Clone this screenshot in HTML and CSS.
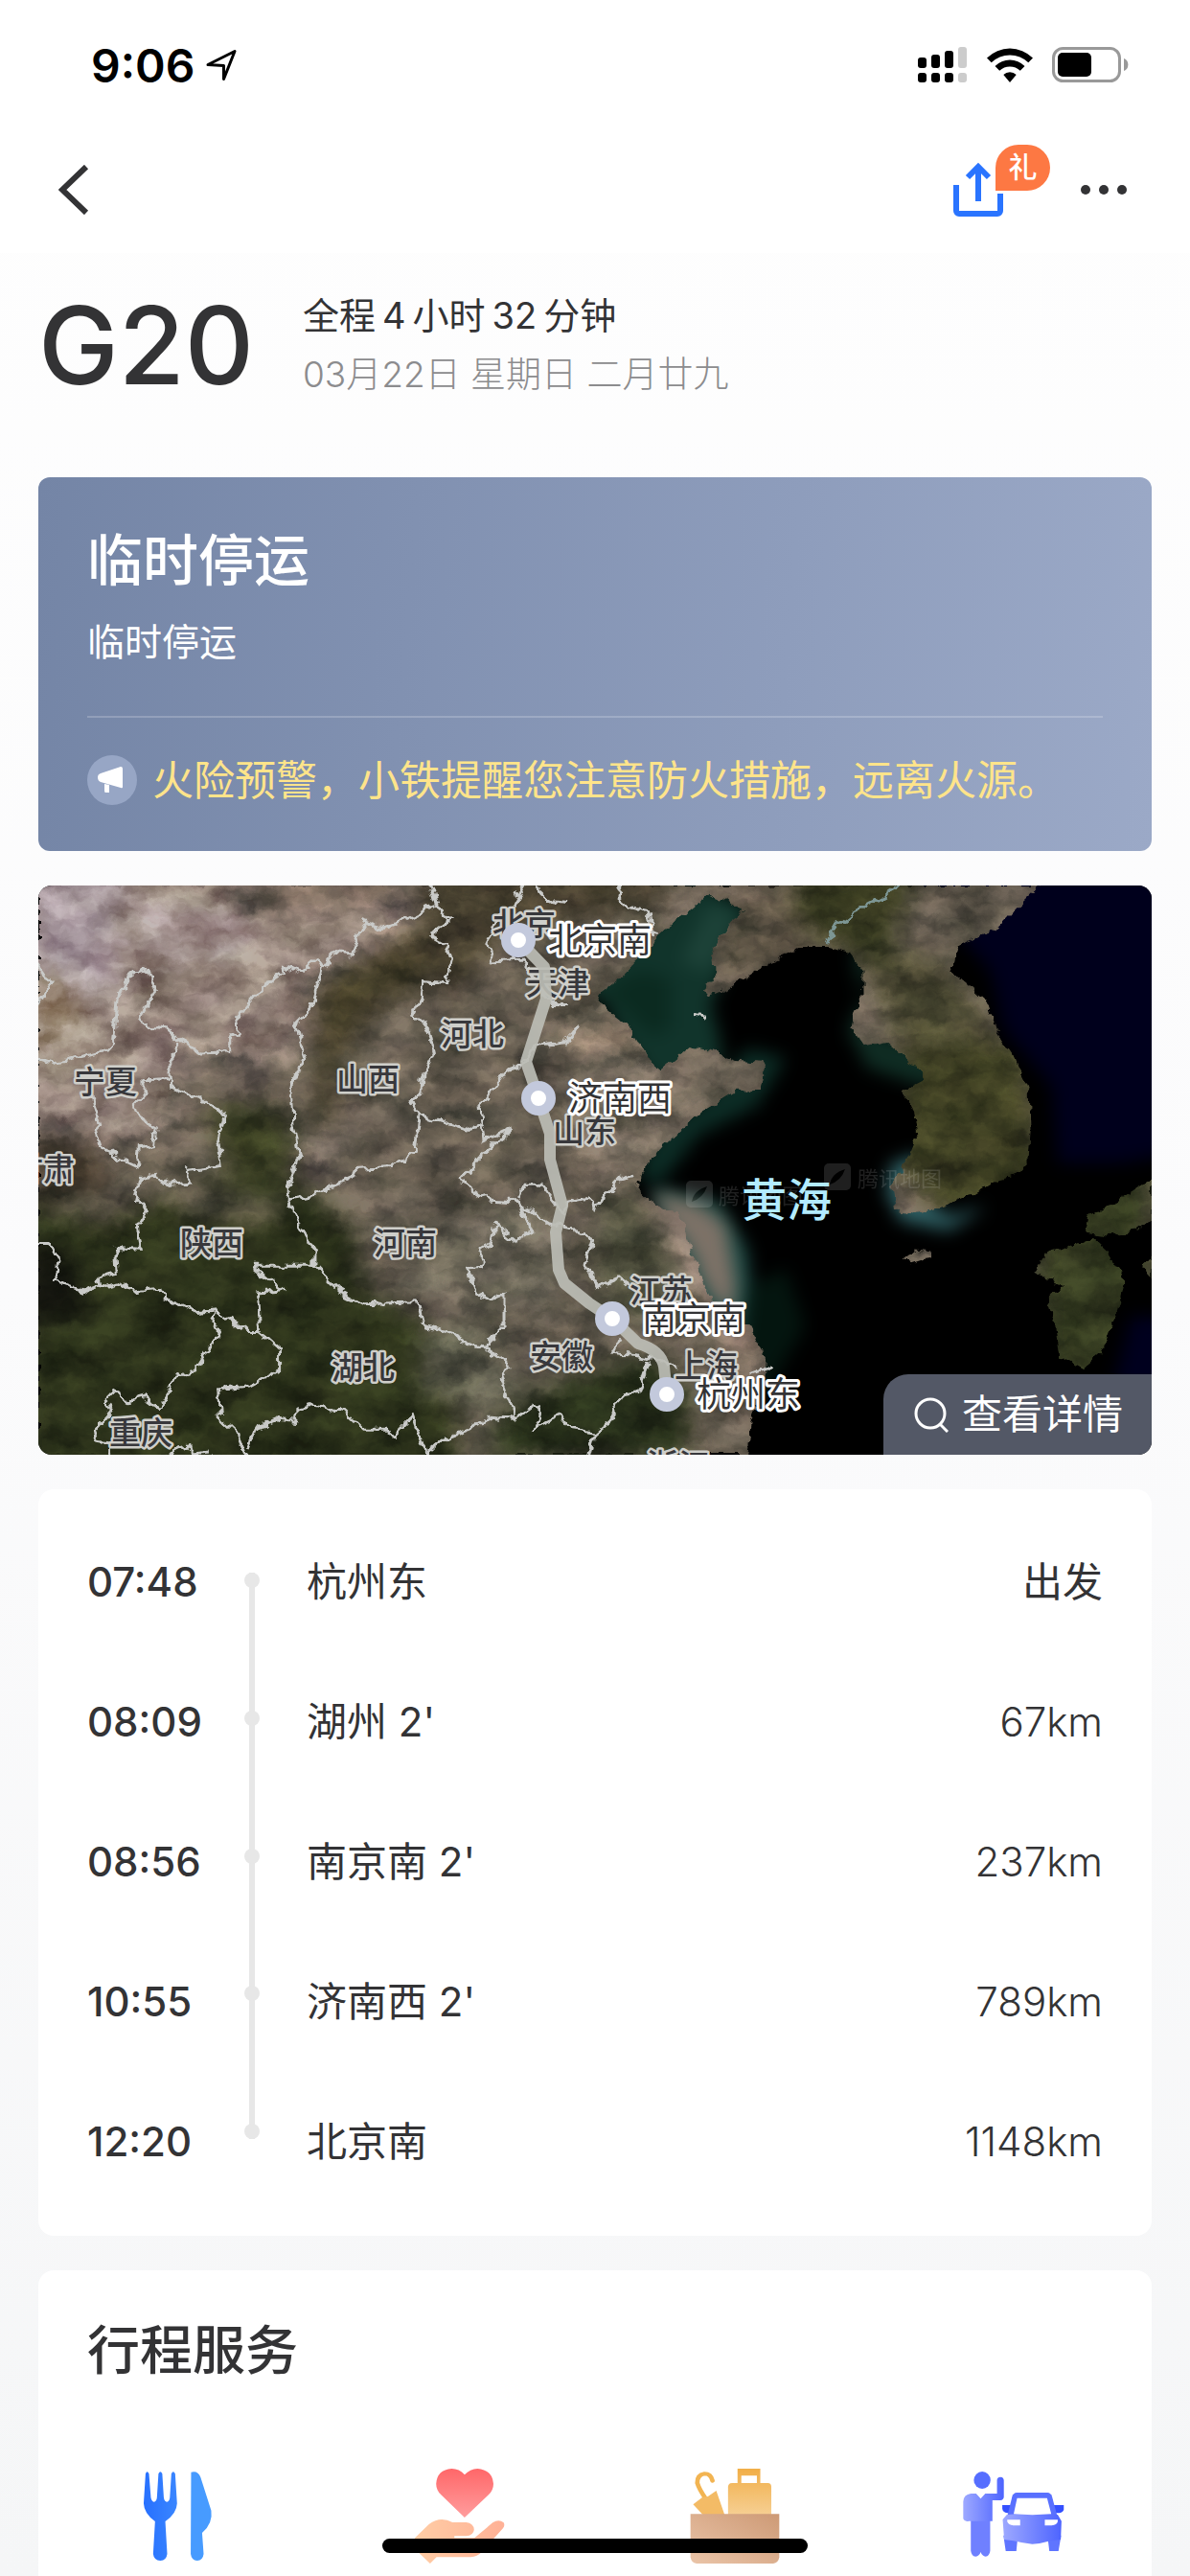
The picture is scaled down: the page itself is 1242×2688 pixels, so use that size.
FILE: index.html
```
<!DOCTYPE html>
<html lang="zh-CN">
<head>
  <meta charset="UTF-8">
  <meta name="viewport" content="width=device-width, initial-scale=1.0">
  <title>G20 列车详情</title>
  <link rel="stylesheet" href="styles.css">
</head>
<body>

  <header class="top">
    <div class="status-bar">
      <div class="status-left">
        <span class="clock">9:06</span>
        <svg class="icon-location" viewBox="0 0 32 34" aria-hidden="true">
          <path d="M2 16.500 30 2.500 18.500 31.500V17.500Z"/>
        </svg>
      </div>
      <div class="status-right">
        <svg width="52" height="38" viewBox="0 0 52 38" aria-hidden="true">
          <rect x="0" y="11" width="9" height="11" rx="3"/>
          <rect x="14" y="8" width="9" height="14" rx="3"/>
          <rect x="28" y="4" width="9" height="18" rx="3"/>
          <rect x="42" y="0" width="9" height="22" rx="3" fill="#ccc"/>
          <rect x="0" y="27" width="9" height="10" rx="3"/>
          <rect x="14" y="27" width="9" height="10" rx="3"/>
          <rect x="28" y="27" width="9" height="10" rx="3"/>
          <rect x="42" y="27" width="9" height="10" rx="3" fill="#ccc"/>
        </svg>
        <svg width="48" height="36" viewBox="0 0 48 36" aria-hidden="true">
          <path d="M0 10.500A34 34 0 0 1 48 10.500L43.300 15.300A27.500 27.500 0 0 0 4.700 15.300Z"/>
          <path d="M8.500 19A22 22 0 0 1 39.500 19L34.800 23.800A15.500 15.500 0 0 0 13.200 23.800Z"/>
          <path d="M17.300 28A9.500 9.500 0 0 1 30.700 28L24 36Z"/>
        </svg>
        <svg width="80" height="38" viewBox="0 0 80 38" aria-hidden="true">
          <rect x="1.500" y="1.500" width="69" height="34" rx="10" fill="none" stroke="#999" stroke-width="3"/>
          <rect x="6" y="6" width="35" height="25" rx="5"/>
          <path d="M75 12a7 7 0 0 1 0 13Z" fill="#999"/>
        </svg>
      </div>
    </div>

    <nav class="nav-bar">
      <button type="button" class="icon-btn" aria-label="返回">
        <svg width="32" height="52" viewBox="0 0 32 52"><path d="M29 2 4 26l25 24" fill="none" stroke="#333335" stroke-width="6"/></svg>
      </button>
      <div class="nav-actions">
        <button type="button" class="icon-btn share" aria-label="分享">
          <svg width="52" height="58" viewBox="0 0 52 58" fill="none" stroke="#2a74ff" stroke-width="6">
            <path d="M3 24v27a3 3 0 0 0 3 3h40a3 3 0 0 0 3-3V33"/>
            <path d="M26 41V5M15 16 26 5l11 11"/>
          </svg>
          <span class="badge">礼</span>
        </button>
        <button type="button" class="icon-btn" aria-label="更多">
          <svg width="50" height="12" viewBox="0 0 50 12" fill="#333335"><circle cx="6" cy="6" r="5"/><circle cx="25" cy="6" r="5"/><circle cx="44" cy="6" r="5"/></svg>
        </button>
      </div>
    </nav>
  </header>

  <main class="content">
    <section class="train">
      <h1 class="train-no">G20</h1>
      <div>
        <p class="duration">全程<span class="num">4</span>小时<span class="num">32</span>分钟</p>
        <p class="date">03月22日 星期日 二月廿九</p>
      </div>
    </section>

    <!-- 停运提示 -->
    <section class="alert">
      <h2>临时停运</h2>
      <p class="alert-text">临时停运</p>
      <div class="notice">
        <svg width="52" height="52" viewBox="0 0 52 52" aria-hidden="true">
          <circle cx="26" cy="26" r="26" fill="#97a6c5"/>
          <path d="M14 19 35 12q2 0 2 2v19q0 2-2 1L14 28q-3-1-3-5 0-3 3-4ZM18 30l5 1v8h-4q-1 0-1-2Z" fill="#fff"/>
        </svg>
        <p>火险预警，小铁提醒您注意防火措施，远离火源。</p>
      </div>
    </section>

    <!-- 线路地图 -->
    <section class="map">
      <svg class="map-canvas" viewBox="0 0 1162 594" role="img" aria-label="线路地图">
        <defs>
          <filter id="blur" x="-20%" y="-20%" width="140%" height="140%" color-interpolation-filters="sRGB"><feGaussianBlur stdDeviation="12"/></filter>
          <filter id="soft" x="-20%" y="-20%" width="140%" height="140%" color-interpolation-filters="sRGB"><feGaussianBlur stdDeviation="9"/></filter>
          <filter id="coast" x="0" y="0" width="100%" height="100%" color-interpolation-filters="sRGB">
            <feTurbulence type="fractalNoise" baseFrequency="0.08" numOctaves="3" seed="4"/>
            <feDisplacementMap in="SourceGraphic" scale="12" xChannelSelector="R" yChannelSelector="G"/>
          </filter>
          <filter id="relief" x="0" y="0" width="100%" height="100%" color-interpolation-filters="sRGB">
            <feTurbulence type="fractalNoise" baseFrequency="0.02 0.035" numOctaves="6" seed="12"/>
            <feColorMatrix values="1.600 0 0 0 -0.260  1.500 0.100 0 0 -0.260  1.500 0 0.100 0 -0.260  0 0 0 0 1"/>
          </filter>
          <clipPath id="land">
            <path transform="matrix(.3827 0 0 .3954 0 -14)" d="M0 0H2756L2736 35 2676 90 2616 150 2546 175 2501 200 2486 265 2526 290 2591 350 2616 420 2666 490 2701 580 2706 680 2701 760 2666 800 2606 815 2546 850 2476 880 2396 905 2336 890 2326 830 2366 770 2396 700 2386 630 2356 580 2416 550 2376 500 2316 450 2256 460 2216 410 2226 370 2251 330 2251 260 2216 215 2156 200 2076 200 1996 235 1936 275 1886 310 1826 330 1816 310 1846 270 1836 200 1886 130 1926 100 1826 60 1766 110 1696 160 1636 230 1576 290 1516 330 1566 370 1606 400 1666 500 1696 525 1776 460 1826 470 1896 495 1976 500 1986 520 1976 575 1896 580 1816 625 1756 680 1706 720 1646 790 1631 830 1686 880 1746 900 1776 980 1806 1070 1836 1130 1936 1200 1986 1290 1976 1360 1946 1450 1926 1600H0Z
              M2746 1010 2816 990 2876 965 2916 1000 2966 1080 2936 1180 2906 1260 2846 1310 2786 1280 2776 1200 2756 1130 2796 1090 2716 1060Z
              M3050 800 2956 860 2866 910 2856 950 2916 960 2996 950 3050 910ZM3050 1000 3011 1040 3050 1095ZM2356 1020 2390 995 2436 1000 2430 1020 2380 1035Z"/>
          </clipPath>
        </defs>

        <rect width="1162" height="594" fill="#000"/>

        <!-- 海域 -->
        <g filter="url(#soft)">
          <path d="M900-20h290v300l-60 10h-66l-6-80-50-60-14-60Z" fill="#00001c"/>
          <path d="M1140 450h40v80h-60z" fill="#00001e"/>
          <path d="M690-5l55 30-18 40-25 60 8 30 5 30-40 15-30 10-35-50-20-40-30-10 70-60Z" fill="#11342b"/>
          <path d="M700 20l30 10-30 60-30-10Z" fill="#1d4238"/>
          <path d="M590 108l40-20 30 10 0 50-20 10-40-40Z" fill="#0b2a20"/>
          <path d="M740 170l40 10-30 50-60 30-40 50-25-5 20-50 50-30Z" fill="#0c2c25"/>
          <path d="M850 70l20-5-10 50 20 40 50 10 20 40-25 5-60-20-20-40 15-30Z" fill="#0f2c23"/>
          <path d="M890 290l30-10 10 50 20 15 40-10-40 25-50-10-15-30Z" fill="#2f6064"/>
          <path d="M640 315l70 15 30 50 5 60-5 60 15 20-5 20-30-10-60-150Z" fill="#1e4a45"/>
          <path d="M740 420l40-20 20 60-40 70-30-30Z" fill="#04150f"/>
        </g>

        <!-- 陆地 -->
        <g filter="url(#coast)">
          <g clip-path="url(#land)">
            <rect width="1162" height="594" fill="#5f574b"/>
            <g filter="url(#blur)">
              <path d="M-20-20h420l-20 70-90 50-20 80-100 10-40 70-110 30-80 60-60-20Z" fill="#8c7b72"/>
              <path d="M-10-20h100l-10 120-90 60Z" fill="#a39399"/>
              <path d="M-10 80l50 20 20 70-70 20Z" fill="#a08f7d"/>
              <path d="M100 20l130 0-20 50-100 20Z" fill="#9c8a87"/>
              <path d="M200 10l190-20-30 25-150 10Z" fill="#54493c"/>
              <path d="M150 180l90 10 0 40-80 0Z" fill="#645a50"/>
              <path d="M170 225l90 10 10 60-70 10Z" fill="#363a20"/>
              <path d="M290 100l100-50 30-30 40 20-50 60-60 30-40 60 0 60-20 20Z" fill="#403a26"/>
              <path d="M400-20l260 0-10 40-160 30-60 70-30-30Z" fill="#443d2d"/>
              <path d="M-20 330l90 20 90-40 100-10 70 60 10 60 70 40 30 60 0 110H-20Z" fill="#2a3019"/>
              <path d="M-20 370l50 10 20 60-70 30Z" fill="#15160f"/>
              <path d="M-10 260l70 10 20 50-90 10Z" fill="#3a3226"/>
              <path d="M130 310l90 20 40 0-20 20-90-10Z" fill="#6b6153"/>
              <path d="M270 270l50-30 10 40-40 20Z" fill="#7a6d63"/>
              <path d="M380 370l140-50 30 50-20 80-80-10-60-20Z" fill="#625d50"/>
              <path d="M400 470l50-20 60 70-40 30-70-20Z" fill="#575647"/>
              <path d="M480 550l80-40 80-20 40 30 0 80H470Z" fill="#262e19"/>
              <path d="M560 170l90 10 60-10-30 60-70 90-50-40Z" fill="#6d6357"/>
              <path d="M590 320l80 30 20 100-80 10-40-60Z" fill="#4b4b3a"/>
              <path d="M640 320l60 10 35 50 10 80-40-10-40-60Z" fill="#8d7b70"/>
              <path d="M715 450l40 30-10 60-30-50Z" fill="#7f6d60"/>
              <path d="M720 0h60l70 40-60 40-80 20Z" fill="#595042"/>
              <path d="M790-20h130l-30 80 60 60-40 40-50-80-70-40Z" fill="#36381f"/>
              <path d="M870 80l60-10 60 60 20 90-40-30-80-30Z" fill="#47452f"/>
              <path d="M900 170l130-10 20 160-100 30-60-60Z" fill="#3a3b20"/>
              <path d="M1030 280h132v260h-110Z" fill="#31371e"/>
              <path d="M545 148l60-5 20 30-50 10ZM615 145l30 20-5 25-25-10Z" fill="#887766"/>
            </g>
            <rect class="relief" width="1162" height="594" filter="url(#relief)"/>
          </g>
        </g>
        <path d="M640 321q55 5 78 35l10 60-2 30q-28-10-42-60Z" fill="#87766b" opacity=".9" filter="url(#soft)"/>

        <!-- 省界 -->
        <g class="borders" filter="url(#coast)">
          <g transform="matrix(.3827 0 0 .3954 0 -14)">
            <path d="M1065 20 1085 90 1125 125 1070 165 1115 190 1130 230 1115 295 1050 290 1045 335 1022 380 1065 420 1080 480 1045 545 1042 590 1015 605 1040 640 1030 735 960 780 865 785 860 805 740 855 680 865"/>
            <path d="M1080 90 1000 125 940 145 890 130 850 220 800 215 775 250 760 230 715 265 665 245 670 265 620 295 540 385 545 430 522 435 522 475 440 478 385 440 350 412 310 408 275 390 322 310 300 255 250 270 215 330 205 450 185 470 120 488 40 505 -10 488"/>
            <path d="M775 250 745 360 700 405 728 490 690 560 695 670 712 750 680 830 680 865 710 930 755 1000 755 1040 585 1040"/>
            <path d="M755 1040 820 1105 890 1140 1035 1135 1050 1195 1130 1220 1170 1245 1215 1255 1285 1300 1260 1340 1275 1380 1300 1445"/>
            <path d="M585 1040 665 1105 600 1110 605 1215 660 1260 660 1315 580 1355 490 1365 495 1440 540 1480 570 1550"/>
            <path d="M-10 230 35 290 -5 350"/>
            <path d="M385 450 360 500 362 570 450 605 510 640 490 710 500 775 405 785 415 820 355 825 320 800 280 805 265 865 298 895 270 940 280 995 210 990 215 1060 160 1075 165 1095 130 1108 45 1080 55 1025 30 980 -10 980"/>
            <path d="M360 545 290 548 290 580 265 610 275 650 322 675 315 720 275 725 270 780 215 755 165 715 155 685 170 670 145 600 140 560"/>
            <path d="M165 1095 215 1080 260 1105 335 1098 345 1125 430 1160 480 1155 575 1215 605 1215"/>
            <path d="M480 1155 470 1180 492 1215 430 1310 380 1330 330 1415 290 1385 250 1395 205 1370 180 1395 200 1420 150 1475 160 1500 195 1505 195 1550M360 1550 375 1520 415 1515 420 1535 470 1530"/>
            <path d="M570 1520 590 1470 650 1445 705 1450 705 1415 740 1405 830 1420 885 1470 950 1470 970 1490 1020 1440 1040 1500 1060 1530 1100 1500 1180 1470 1230 1440 1300 1445 1350 1410 1370 1430 1355 1465 1420 1435 1450 1470 1520 1480 1500 1550M1520 1480 1556 1450 1591 1380 1636 1375 1666 1290"/>
            <path d="M1335 20 1290 100 1250 130 1220 190 1240 235 1320 230 1365 300 1400 350 1445 350M1355 40 1400 80 1440 85M1591 20 1581 65 1616 95 1661 105 1671 160 1690 163"/>
            <path d="M1475 400 1435 450 1360 458 1310 510 1280 520 1205 620 1215 710 1295 675 1210 750 1155 815 1225 865 1310 870 1345 950 1300 975 1245 930 1235 980 1210 995 1210 1040 1165 1045 1195 1110 1235 1130 1270 1115 1270 1205 1215 1255"/>
            <path d="M1040 640 1170 680 1220 665"/>
            <path d="M1310 860 1330 825 1370 825 1430 900 1450 870 1500 860 1520 890 1546 850 1586 810 1626 800"/>
            <path d="M1300 870 1400 930 1450 940 1510 970 1490 1030 1525 1095 1586 1070 1610 1090M1586 1230 1566 1270 1666 1280 1740 1305M1790 375 1818 380M1940 1325 2000 1305"/>
            <path class="river" d="M2151 190 2166 150 2226 105 2306 65 2350 35"/>
          </g>
        </g>

        <!-- 水印 -->
        <g class="watermark">
          <rect x="676" y="308" width="28" height="28" rx="5"/>
          <path d="M682 330q2-12 16-16-4 12-16 16Z" fill="#000"/>
          <text x="710" y="322">腾讯地图</text>
          <rect x="820" y="290" width="28" height="28" rx="5"/>
          <path d="M826 312q2-12 16-16-4 12-16 16Z" fill="#000"/>
          <text x="855" y="304">腾讯地图</text>
        </g>

        <g class="province">
          <text x="-28" y="294">甘肃</text>
          <text x="37" y="203">宁夏</text>
          <text x="311" y="200">山西</text>
          <text x="420" y="153">河北</text>
          <text x="474" y="38">北京</text>
          <text x="509" y="100">天津</text>
          <text x="537" y="254">山东</text>
          <text x="148" y="371">陕西</text>
          <text x="350" y="371">河南</text>
          <text x="306" y="501">湖北</text>
          <text x="513" y="489">安徽</text>
          <text x="74" y="569">重庆</text>
          <text x="617" y="421">江苏</text>
          <text x="664" y="499">上海</text>
          <text x="635" y="603">浙江</text>
        </g>
        <text class="sea" x="734" y="324">黄海</text>

        <path class="route" d="M501 57 528 85 530 118 509 184 522 222 534 259 534 286 547 334 540 362 543 401 549 415 575 436 599 452 626 478Q650 485 653 502L656 531"/>
        <g class="station-dot">
          <circle cx="501" cy="57" r="13"/>
          <circle cx="522" cy="222" r="13"/>
          <circle cx="599" cy="452" r="13"/>
          <circle cx="656" cy="531" r="13"/>
        </g>
        <g class="station">
          <text x="532" y="54">北京南</text>
          <text x="553" y="219">济南西</text>
          <text x="630" y="449">南京南</text>
          <text x="687" y="528">杭州东</text>
        </g>
      </svg>
      <button type="button" class="map-detail">
        <svg width="36" height="38" viewBox="0 0 36 38" fill="none" stroke="#fff" stroke-width="3" aria-hidden="true"><circle cx="17" cy="18" r="15"/><path d="m27 29 8 8"/></svg>
        查看详情
      </button>
    </section>

    <!-- 停靠站 -->
    <section class="card stops">
      <ol class="stop-list">
        <li><time>07:48</time><span>杭州东</span><span>出发</span></li>
        <li><time>08:09</time><span>湖州 2'</span><span class="km">67km</span></li>
        <li><time>08:56</time><span>南京南 2'</span><span class="km">237km</span></li>
        <li><time>10:55</time><span>济南西 2'</span><span class="km">789km</span></li>
        <li><time>12:20</time><span>北京南</span><span class="km">1148km</span></li>
      </ol>
      <div class="rail" aria-hidden="true"><i></i><i></i><i></i><i></i><i></i></div>
    </section>

    <!-- 行程服务 -->
    <section class="card services">
      <h2>行程服务</h2>
      <div class="service-grid">
        <a href="#" aria-label="订餐">
          <svg viewBox="316 660 303 348" preserveAspectRatio="none">
            <defs>
              <linearGradient id="fork" x1="0" x2="1"><stop offset="0" stop-color="#2770ff"/><stop offset="1" stop-color="#3a86ff"/></linearGradient>
            </defs>
            <path fill="url(#fork)" d="M384 697Q388 684 393 697L398 772Q400 784 406 785Q413 784 414 772L418 697Q423 684 428 697L432 772Q434 785 440 785Q447 784 448 772L452 697Q457 684 462 697L467 790Q466 822 436 846L441 948Q439 968 423 969Q406 968 404 948L409 846Q380 822 379 790Z"/>
            <path fill="#479bff" d="M504 692Q522 686 529 708L557 812Q562 852 533 882L537 948Q535 968 520 969Q505 968 503 948Z"/>
          </svg>
        </a>
        <a href="#" aria-label="温馨服务">
          <svg viewBox="1050 660 303 348" preserveAspectRatio="none">
            <defs>
              <linearGradient id="heart" x1="0" y1="0" x2="0" y2="1"><stop offset="0" stop-color="#ff6769"/><stop offset="1" stop-color="#ff9d9d"/></linearGradient>
              <linearGradient id="hand" x1="0" x2="1"><stop offset="0" stop-color="#ffcda5"/><stop offset="1" stop-color="#ffb196"/></linearGradient>
            </defs>
            <path fill="url(#heart)" d="M1224 700Q1210 681 1190 681Q1151 685 1149 728Q1149 748 1162 763L1224 834 1287 763Q1300 748 1300 728Q1297 685 1258 681Q1238 682 1224 700Z"/>
            <path fill="url(#hand)" d="M1093 898 1130 855Q1160 828 1192 849H1228Q1248 852 1249 872Q1247 890 1228 892H1197V898H1250L1298 850Q1314 838 1327 850Q1331 859 1325 868L1268 943Q1258 957 1240 958H1150L1133 978 1093 932Z"/>
          </svg>
        </a>
        <a href="#" aria-label="遗失物品">
          <svg viewBox="215 660 303 348" preserveAspectRatio="none">
            <defs>
              <linearGradient id="bag" x1="0" y1="0" x2="0" y2="1"><stop offset="0" stop-color="#f1ae47"/><stop offset="1" stop-color="#f6cf93"/></linearGradient>
              <linearGradient id="box" x1="0" y1="1" x2="1" y2="0"><stop offset="0" stop-color="#eac4a8"/><stop offset="1" stop-color="#cd9a76"/></linearGradient>
            </defs>
            <path fill="url(#bag)" fill-rule="evenodd" d="M376 681H436V726H456Q465 727 465 737V826H351V737Q352 727 361 726H376ZM386 703V726H427V703Z"/>
            <path fill="none" stroke="#f2b452" stroke-width="12" stroke-linecap="round" d="M310 719Q306 697 289 697Q269 701 270 726Q275 745 290 771"/>
            <path fill="#f3bb66" d="M259 793 283 771 298 768 320 750 342 826H285Z"/>
            <path fill="url(#box)" d="M252 823H486V958Q484 976 470 978H268Q254 976 252 958Z"/>
          </svg>
        </a>
        <a href="#" aria-label="约车">
          <svg viewBox="949 660 303 348" preserveAspectRatio="none">
            <defs>
              <linearGradient id="car" x1="0" x2="1"><stop offset="0" stop-color="#9ea9ff"/><stop offset="1" stop-color="#4d64ff"/></linearGradient>
            </defs>
            <ellipse cx="1020" cy="717" rx="22" ry="27" fill="#566eff"/>
            <path fill="#6f80ff" d="M990 830H1041V938Q1039 955 1029 956Q1020 955 1016 942Q1012 955 1003 956Q992 955 990 938Z"/>
            <path fill="url(#car)" d="M1004 759 1016 775 1028 759H1059V718Q1059 707 1068 707Q1077 708 1077 718V770Q1076 779 1068 780H1047V845H985Q974 849 970 838V784Q971 762 990 759Z"/>
            <path fill="#3450ff" d="M1073 795H1235V810Q1232 819 1222 820H1086Q1074 817 1073 806Z"/>
            <path fill="#5f75ff" d="M1076 890H1114L1110 939H1082ZM1192 890H1228L1221 939H1197Z"/>
            <path fill="#5970ff" d="M1087 826 1099 768Q1102 757 1111 756H1192Q1201 757 1204 768L1217 826Z"/>
            <path fill="url(#car)" d="M1085 825Q1152 817 1219 825L1229 845 1227 903 1200 907Q1175 916 1152 917Q1128 915 1103 907L1078 903 1074 840Z"/>
            <path fill="#fff" d="M1112 773H1191L1202 823Q1152 828 1103 823ZM1086 841H1120V859H1102Q1089 857 1086 847ZM1219 841H1185V859H1203Q1217 857 1219 847Z"/>
          </svg>
        </a>
      </div>
    </section>
  </main>

  <div class="home-indicator"></div>

</body>
</html>
```
FILE: styles.css
```
* {
  margin: 0;
  padding: 0;
  box-sizing: border-box;
}

body {
  display: flex;
  flex-direction: column;
  min-height: 100vh;
  font-family: Inter, "Noto Sans CJK SC", sans-serif;
  font-size: 43px;
  color: #333335;
  background: linear-gradient(#fefefe, #fbfbfc 50%, #f5f6f7);
}

button {
  font-family: inherit;
  border: none;
  background: none;
  cursor: pointer;
}

svg {
  display: block;
}

/* 顶部 */
.top {
  background-color: #fff;
}

.status-bar {
  display: flex;
  justify-content: space-between;
  align-items: center;
  height: 132px;
  padding: 4px 64px 0 95px;
}

.status-left {
  display: flex;
  align-items: center;
  gap: 12px;
}

.status-right {
  display: flex;
  align-items: center;
  gap: 20px;
}

.clock {
  font-size: 48px;
  font-weight: 600;
  color: #000;
}

.icon-location {
  width: 32px;
  height: 34px;
  fill: none;
  stroke: #000;
  stroke-width: 3;
  stroke-linejoin: round;
}

.nav-bar {
  display: flex;
  justify-content: space-between;
  align-items: center;
  height: 132px;
  padding: 0 65px 0 61px;
}

.nav-actions {
  display: flex;
  align-items: center;
  gap: 80px;
}

.share {
  position: relative;
}

.badge {
  position: absolute;
  left: 44px;
  top: -18px;
  width: 57px;
  height: 48px;
  border-radius: 24px 24px 24px 0;
  background-color: #fd7843;
  color: #fff;
  font-size: 30px;
  font-weight: 500;
  line-height: 46px;
  text-align: center;
}

/* 车次信息 */
.content {
  flex: 1;
  display: flex;
  flex-direction: column;
  gap: 36px;
  padding: 0 40px;
}

.train {
  display: flex;
  align-items: center;
  padding: 34px 0 40px;
}

.train-no {
  min-width: 276px;
  font-size: 112px;
  font-weight: 500;
  line-height: 124px;
}

.duration, .date {
  line-height: 62px;
}

.duration {
  font-size: 38px;
}

.num {
  margin: 0 7px;
}

.date {
  font-size: 37px;
  font-weight: 300;
  color: #8c8c8e;
}

/* 停运提示 */
.alert {
  padding: 52px 51px 48px;
  border-radius: 12px;
  color: #fff;
  background: linear-gradient(95deg, #7485a6, #9ba9c7);
}

.alert h2 {
  font-size: 58px;
  font-weight: 500;
  line-height: 70px;
}

.alert-text {
  margin-top: 20px;
  font-size: 39px;
  line-height: 60px;
}

.notice {
  display: flex;
  align-items: center;
  gap: 16px;
  margin-top: 47px;
  padding-top: 39px;
  border-top: 2px solid rgba(255, 255, 255, 0.2);
  color: #ffe48a;
  line-height: 52px;
}

/* 地图 */
.map {
  position: relative;
  overflow: hidden;
  border-radius: 14px;
}

.map-canvas {
  width: 100%;
  height: auto;
  font-family: "Noto Sans CJK SC", sans-serif;
}

.map-canvas text {
  dominant-baseline: central;
  paint-order: stroke;
  stroke-linejoin: round;
}

.relief {
  mix-blend-mode: overlay;
  opacity: 0.4;
}

.borders path {
  fill: none;
  stroke: #c9cac8;
  stroke-width: 3;
  vector-effect: non-scaling-stroke;
}

.borders .river {
  stroke: #7d9694;
}

.province {
  font-size: 33px;
  font-weight: 500;
  fill: #38383c;
  stroke: #cfcfca;
  stroke-width: 5;
}

.sea {
  font-size: 47px;
  font-weight: 500;
  fill: #b2ebff;
}

.watermark {
  font-size: 22px;
  fill: #fff;
  opacity: 0.12;
}

.route {
  fill: none;
  stroke: #bcbdb5;
  stroke-width: 12;
  stroke-linejoin: round;
  opacity: 0.92;
}

.station-dot {
  fill: #fff;
  stroke: #c3c9dc;
  stroke-width: 10;
}

.station {
  font-size: 36px;
  fill: #333335;
  stroke: #fff;
  stroke-width: 6;
}

.map-detail {
  position: absolute;
  right: 0;
  bottom: 0;
  display: flex;
  align-items: center;
  gap: 14px;
  height: 84px;
  padding: 0 30px 0 32px;
  border-radius: 26px 0 0 0;
  background-color: #535866;
  color: #fff;
  font-size: 42px;
  line-height: 80px;
}

/* 停靠站 */
.card {
  border-radius: 16px;
  background-color: #fff;
}

.stops {
  display: grid;
}

.stop-list {
  grid-area: 1 / 1;
  padding: 24px 51px 25px;
  list-style: none;
}

.stop-list li {
  display: grid;
  grid-template-columns: 229px 1fr auto;
  font-size: 42px;
  line-height: 146px;
}

.stop-list time {
  font-weight: 500;
}

.stop-list .km {
  font-weight: 300;
}

.rail {
  grid-area: 1 / 1;
  justify-self: start;
  display: flex;
  flex-direction: column;
  justify-content: space-between;
  margin: 87px 0 101px 215px;
  background: linear-gradient(#e7e7e7, #e7e7e7) center / 6px 100% no-repeat;
}

.rail i {
  width: 16px;
  height: 16px;
  border-radius: 50%;
  background-color: #e7e7e7;
}

/* 行程服务 */
.services {
  flex: 1;
  padding-top: 48px;
  border-radius: 16px 16px 0 0;
}

.services h2 {
  padding: 0 51px;
  font-size: 55px;
  font-weight: 500;
  line-height: 70px;
}

.service-grid {
  display: grid;
  grid-template-columns: repeat(4, 1fr);
  justify-items: center;
  margin-top: 82px;
}

.service-grid svg {
  width: 120px;
  height: 116px;
}

.home-indicator {
  position: fixed;
  left: 50%;
  bottom: 24px;
  width: 444px;
  height: 15px;
  border-radius: 8px;
  background-color: #000;
  transform: translateX(-50%);
}
```
